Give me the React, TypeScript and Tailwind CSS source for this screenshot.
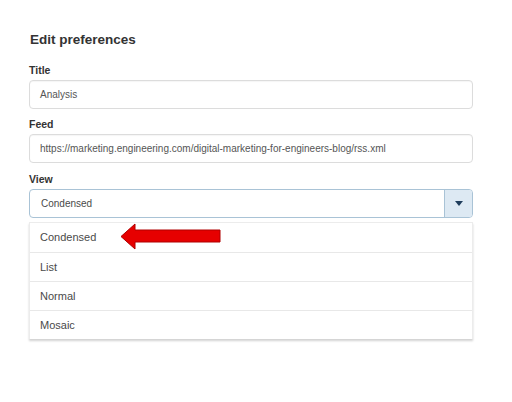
import React from 'react';

const options = ['Condensed', 'List', 'Normal', 'Mosaic'];

function Label({ children }: { children: React.ReactNode }) {
  return <div className="h-[14px] text-[10.5px] leading-[14px] font-bold text-[#333]">{children}</div>;
}

function TextInput({ value }: { value: string }) {
  return (
    <div className="mt-[3px] h-[29px] rounded-[4px] border border-[#dcdcdc] bg-white px-[10px] flex items-center text-[10px] text-[#555] shadow-[inset_0_1px_1px_rgba(0,0,0,0.04)]">
      {value}
    </div>
  );
}

function RedArrow() {
  return (
    <svg className="absolute left-[90px] top-0" width="101" height="27" viewBox="0 0 101 27">
      <path d="M1 13.5 L15 1 L15 7 L100 7 L100 19 L15 19 L15 26 Z" fill="#e60000" stroke="#b00000" strokeWidth="1" strokeLinejoin="round" />
    </svg>
  );
}

export default function App() {
  return (
    <div className="w-[512px] h-[402px] bg-white pt-[30px] pl-[29px]" style={{ fontFamily: '"Liberation Sans", Arial, sans-serif' }}>
      <div className="w-[444px]">
        <h2 className="h-[20px] text-[13.5px] leading-[20px] font-bold text-[#333] pl-[1px]">Edit preferences</h2>

        <div className="mt-[13px]">
          <Label>Title</Label>
          <TextInput value="Analysis" />
        </div>

        <div className="mt-[8px]">
          <Label>Feed</Label>
          <TextInput value="https://marketing.engineering.com/digital-marketing-for-engineers-blog/rss.xml" />
        </div>

        <div className="mt-[9px]">
          <Label>View</Label>
          <div className="mt-[3px] h-[29px] rounded-[4px] border border-[#a9c3d6] bg-white flex items-stretch overflow-hidden">
            <div className="flex-1 px-[11px] flex items-center text-[10px] text-[#4a4a4a]">Condensed</div>
            <div className="w-[28px] border-l border-[#a9c3d6] bg-[#dde9f3] flex items-center justify-center">
              <svg width="8" height="5" viewBox="0 0 8 5">
                <path d="M0 0 L8 0 L4 5 Z" fill="#1f3d5c" />
              </svg>
            </div>
          </div>

          <ul className="relative mt-[4px] bg-white border border-b-0 border-[#ececec] shadow-[0_2px_2px_rgba(0,0,0,0.18)]">
            {options.map((opt, i) => (
              <li
                key={opt}
                className={`h-[29px] px-[10px] flex items-center text-[11px] text-[#4a4a4a] ${i > 0 ? 'border-t border-[#e8e8e8]' : ''}`}
              >
                {opt}
              </li>
            ))}
            <RedArrow />
          </ul>
        </div>
      </div>
    </div>
  );
}
